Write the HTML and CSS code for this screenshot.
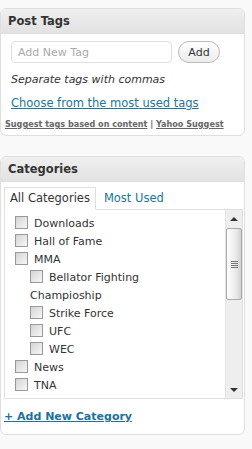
FILE: index.html
```html
<!DOCTYPE html>
<html lang="en">
<head>
  <meta charset="UTF-8">
  <title>Post Tags and Categories</title>
  <link rel="stylesheet" href="styles.css">
</head>
<body>
  <div class="box">
    <h3>Post Tags</h3>
    <div class="inside tags">
      <div class="add-row">
        <input type="text" class="new-tag" placeholder="Add New Tag">
        <button class="btn">Add</button>
      </div>
      <p class="howto">Separate tags with commas</p>
      <p><a href="#" class="link">Choose from the most used tags</a></p>
      <p class="suggest"><a href="#">Suggest tags based on content</a> | <a href="#">Yahoo Suggest</a></p>
    </div>
  </div>

  <div class="box">
    <h3>Categories</h3>
    <div class="inside cats">
      <div class="tabs">
        <span class="tab active">All Categories</span>
        <a href="#" class="tab">Most Used</a>
      </div>
      <div class="list-box">
        <ul class="checklist">
          <li><span class="cb"></span>Downloads</li>
          <li><span class="cb"></span>Hall of Fame</li>
          <li><span class="cb"></span>MMA
            <ul class="children">
              <li><span class="cb"></span>Bellator Fighting Champioship</li>
              <li><span class="cb"></span>Strike Force</li>
              <li><span class="cb"></span>UFC</li>
              <li><span class="cb"></span>WEC</li>
            </ul>
          </li>
          <li><span class="cb"></span>News</li>
          <li><span class="cb"></span>TNA</li>
        </ul>
        <div class="scrollbar">
          <div class="arrow up"></div>
          <div class="track">
            <div class="thumb"><span class="grip"></span></div>
          </div>
          <div class="arrow down"></div>
        </div>
      </div>
      <p class="add-cat"><a href="#">+ Add New Category</a></p>
    </div>
  </div>
</body>
</html>
```

FILE: styles.css
```css
body {
  margin: 0;
  background: #f9f9f9;
  font-family: "DejaVu Sans", Verdana, sans-serif;
  font-size: 11px;
  color: #333;
}
p {
  margin: 0;
}
a {
  color: #21759b;
}
.box {
  width: 243px;
  margin: 8px 0 20px 0;
  background: #fff;
  border: 1px solid #dfdfdf;
  border-radius: 6px;
  overflow: hidden;
}
.box h3 {
  margin: 0;
  height: 24px;
  line-height: 24px;
  padding-left: 7px;
  font-size: 11.5px;
  font-weight: bold;
  color: #333;
  background: linear-gradient(#efefef, #e2e2e2);
  border-bottom: 1px solid #dfdfdf;
}
.tags {
  padding: 7px 10px 5px 10px;
}
.add-row {
  display: flex;
  gap: 6px;
  align-items: center;
}
.new-tag {
  width: 161px;
  height: 22px;
  box-sizing: border-box;
  border: 1px solid #dfdfdf;
  border-radius: 4px;
  padding: 0 6px;
  font-family: inherit;
  font-size: 11px;
  color: #333;
}
.new-tag::placeholder {
  color: #aaa;
}
.btn {
  width: 42px;
  height: 22px;
  border: 1px solid #bbb;
  border-radius: 11px;
  background: linear-gradient(#fff, #ececec);
  font-family: inherit;
  font-size: 11px;
  color: #333;
  padding: 0;
}
.howto {
  margin-top: 10px;
  font-style: italic;
  color: #333;
  line-height: 14px;
}
.link {
  display: inline-block;
  margin-top: 9px;
  font-size: 11.5px;
  line-height: 14px;
}
.suggest {
  margin: 8px 0 0 -6px;
  font-size: 8.1px;
  font-weight: bold;
  line-height: 12px;
  white-space: nowrap;
  color: #666;
}
.suggest a {
  color: #666;
}
.cats {
  padding: 5px 1px 10px 3px;
}
.tabs {
  display: flex;
  align-items: center;
  gap: 8px;
  font-size: 11.5px;
}
.tab {
  line-height: 20px;
  text-decoration: none;
}
.tab.active {
  color: #333;
  padding: 0 5px;
  border: 1px solid #dfdfdf;
  border-bottom: 1px solid #fff;
  margin-bottom: -1px;
  position: relative;
  line-height: 21px;
}
.list-box {
  display: flex;
  height: 188px;
  border: 1px solid #dfdfdf;
  overflow: hidden;
}
.checklist {
  flex: 1;
  list-style: none;
  margin: 0;
  padding: 5px 24px 0 10px;
  line-height: 18px;
}
.children {
  list-style: none;
  margin: 0;
  padding-left: 15px;
}
.cb {
  display: inline-block;
  width: 11px;
  height: 11px;
  margin: 0 6px -2px 0;
  border: 1px solid #999;
  background: linear-gradient(135deg, #d4d4d4, #f7f7f7);
}
.scrollbar {
  width: 16px;
  display: flex;
  flex-direction: column;
  background: #eeeeee;
  border-left: 1px solid #e4e4e4;
}
.arrow {
  height: 17px;
  display: flex;
  align-items: center;
  justify-content: center;
}
.arrow::before {
  content: "";
  border-left: 4px solid transparent;
  border-right: 4px solid transparent;
}
.arrow.up::before {
  border-bottom: 4px solid #333;
}
.arrow.down::before {
  border-top: 4px solid #333;
}
.track {
  flex: 1;
}
.thumb {
  margin: 1px 0 0 0;
  height: 72px;
  box-sizing: border-box;
  border: 1px solid #aaa;
  border-radius: 2px;
  background: linear-gradient(90deg, #fff, #e6e6e6 70%, #d0d0d0);
  display: flex;
  align-items: center;
  justify-content: center;
}
.grip {
  width: 7px;
  height: 7px;
  background: repeating-linear-gradient(#777 0 1px, transparent 1px 2px);
}
.add-cat {
  margin-top: 11px;
  font-weight: bold;
  line-height: 14px;
}
.add-cat a {
  color: #22709a;
}
```
